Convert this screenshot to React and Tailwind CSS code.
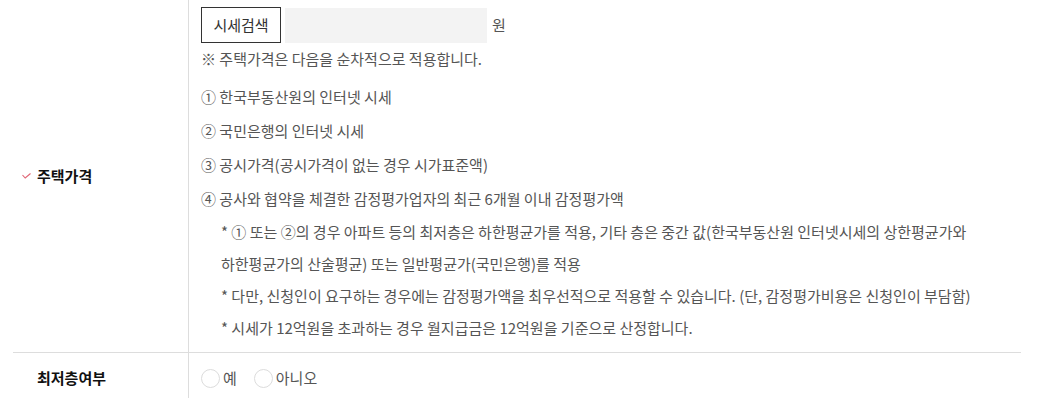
import React from 'react';

const font = { fontFamily: '"Noto Sans CJK KR", "Noto Sans", sans-serif' };

function Check() {
  return (
    <svg width="9" height="6" viewBox="0 0 9 6" className="mr-[6px]">
      <path d="M0.5 2 L3.2 5 L8.5 0.5" fill="none" stroke="#e06474" strokeWidth="1.1" />
    </svg>
  );
}

function Radio({ label }) {
  return (
    <label className="flex items-center mr-[17px]">
      <span className="w-[19px] h-[19px] rounded-full border border-[#dcdcdc] bg-white" />
      <span className="ml-[3px] text-[15px] text-[#555]">{label}</span>
    </label>
  );
}

export default function App() {
  return (
    <div className="bg-white w-[1038px] h-[398px] overflow-hidden" style={font}>
      <div className="ml-[13px] w-[1008px]">
        {/* 주택가격 */}
        <div className="flex border-b border-[#dddddd]">
          <div className="w-[176px] shrink-0 flex items-center pl-[9px] border-r border-[#dddddd]">
            <Check />
            <span className="text-[15px] font-bold text-[#111]">주택가격</span>
          </div>
          <div className="flex-1 pl-[12px] pt-[7px] pb-[8px] text-[15px] text-[#555]">
            <div className="flex items-center">
              <button className="h-[36px] w-[80px] border border-[#333] bg-white text-[15px] text-[#333]">
                시세검색
              </button>
              <div className="ml-[4px] h-[35px] w-[202px] bg-[#f3f3f3]" />
              <span className="ml-[5px]">원</span>
            </div>
            <p className="mt-[4px] leading-[24px]">※ 주택가격은 다음을 순차적으로 적용합니다.</p>
            <div className="mt-[9px] leading-[34px]">
              <p>① 한국부동산원의 인터넷 시세</p>
              <p>② 국민은행의 인터넷 시세</p>
              <p>③ 공시가격(공시가격이 없는 경우 시가표준액)</p>
              <p>④ 공사와 협약을 체결한 감정평가업자의 최근 6개월 이내 감정평가액</p>
            </div>
            <div className="pl-[20px] leading-[32px]">
              <p>* ① 또는 ②의 경우 아파트 등의 최저층은 하한평균가를 적용, 기타 층은 중간 값(한국부동산원 인터넷시세의 상한평균가와</p>
              <p>하한평균가의 산술평균) 또는 일반평균가(국민은행)를 적용</p>
              <p>* 다만, 신청인이 요구하는 경우에는 감정평가액을 최우선적으로 적용할 수 있습니다. (단, 감정평가비용은 신청인이 부담함)</p>
              <p>* 시세가 12억원을 초과하는 경우 월지급금은 12억원을 기준으로 산정합니다.</p>
            </div>
          </div>
        </div>
        {/* 최저층여부 */}
        <div className="flex h-[50px]">
          <div className="w-[176px] shrink-0 flex items-center pl-[24px] border-r border-[#dddddd]">
            <span className="text-[15px] font-bold text-[#111]">최저층여부</span>
          </div>
          <div className="flex-1 flex items-center pl-[12px]">
            <Radio label="예" />
            <Radio label="아니오" />
          </div>
        </div>
      </div>
    </div>
  );
}
